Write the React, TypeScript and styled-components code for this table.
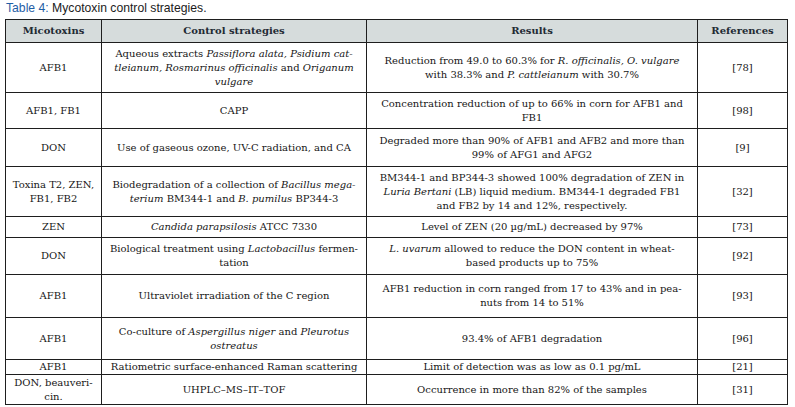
import React from 'react';
import styled, {createGlobalStyle} from 'styled-components';

interface RowData {
    h: number,
    toxin: React.ReactNode,
    strategy: React.ReactNode,
    result: React.ReactNode,
    ref: string
}

// row heights are taken from the scanned table, border included
const ROWS: RowData[] = [
    {
        h: 50,
        toxin: 'AFB1',
        strategy: <>Aqueous extracts <i>Passiflora alata, Psidium cat-</i><br /><i>tleianum, Rosmarinus officinalis</i> and <i>Origanum</i><br /><i>vulgare</i></>,
        result: <>Reduction from 49.0 to 60.3% for <i>R. officinalis, O. vulgare</i><br />with 38.3% and <i>P. cattleianum</i> with 30.7%</>,
        ref: '[78]'
    },
    {
        h: 36,
        toxin: 'AFB1, FB1',
        strategy: 'CAPP',
        result: <>Concentration reduction of up to 66% in corn for AFB1 and<br />FB1</>,
        ref: '[98]'
    },
    {
        h: 38,
        toxin: 'DON',
        strategy: 'Use of gaseous ozone, UV-C radiation, and CA',
        result: <>Degraded more than 90% of AFB1 and AFB2 and more than<br />99% of AFG1 and AFG2</>,
        ref: '[9]'
    },
    {
        h: 50,
        toxin: <>Toxina T2, ZEN,<br />FB1, FB2</>,
        strategy: <>Biodegradation of a collection of <i>Bacillus mega-</i><br /><i>terium</i> BM344-1 and <i>B. pumilus</i> BP344-3</>,
        result: <>BM344-1 and BP344-3 showed 100% degradation of ZEN in<br /><i>Luria Bertani</i> (LB) liquid medium. BM344-1 degraded FB1<br />and FB2 by 14 and 12%, respectively.</>,
        ref: '[32]'
    },
    {
        h: 21,
        toxin: 'ZEN',
        strategy: <><i>Candida parapsilosis</i> ATCC 7330</>,
        result: 'Level of ZEN (20 µg/mL) decreased by 97%',
        ref: '[73]'
    },
    {
        h: 37,
        toxin: 'DON',
        strategy: <>Biological treatment using <i>Lactobacillus</i> fermen-<br />tation</>,
        result: <><i>L. uvarum</i> allowed to reduce the DON content in wheat-<br />based products up to 75%</>,
        ref: '[92]'
    },
    {
        h: 43,
        toxin: 'AFB1',
        strategy: 'Ultraviolet irradiation of the C region',
        result: <>AFB1 reduction in corn ranged from 17 to 43% and in pea-<br />nuts from 14 to 51%</>,
        ref: '[93]'
    },
    {
        h: 42,
        toxin: 'AFB1',
        strategy: <>Co-culture of <i>Aspergillus niger</i> and <i>Pleurotus</i><br /><i>ostreatus</i></>,
        result: '93.4% of AFB1 degradation',
        ref: '[96]'
    },
    {
        h: 15,
        toxin: 'AFB1',
        strategy: 'Ratiometric surface-enhanced Raman scattering',
        result: 'Limit of detection was as low as 0.1 pg/mL',
        ref: '[21]'
    },
    {
        h: 29,
        toxin: <>DON, beauveri-<br />cin.</>,
        strategy: 'UHPLC–MS–IT–TOF',
        result: 'Occurrence in more than 82% of the samples',
        ref: '[31]'
    }
];

const App = () => {
    return (<>
        <GlobalStyle />
        <Page>
            <Caption><CaptionLabel>Table 4:</CaptionLabel> Mycotoxin control strategies.</Caption>
            <Table>
                <HeadRow>
                    <HeadCell><CellText>Micotoxins</CellText></HeadCell>
                    <HeadCell><CellText>Control strategies</CellText></HeadCell>
                    <HeadCell><CellText>Results</CellText></HeadCell>
                    <HeadCell><CellText>References</CellText></HeadCell>
                </HeadRow>
                {ROWS.map((row, i) =>
                    <Row key={i} $h={row.h}>
                        <Cell><CellText>{row.toxin}</CellText></Cell>
                        <Cell><CellText>{row.strategy}</CellText></Cell>
                        <Cell><CellText>{row.result}</CellText></Cell>
                        <Cell><CellText>{row.ref}</CellText></Cell>
                    </Row>
                )}
            </Table>
        </Page>
    </>)
}

const GlobalStyle = createGlobalStyle`
    html, body {
        margin: 0;
        background: #ffffff;
    }
`

const Page = styled.div`
    width: 795px;
    padding: 0 0 0 5px;
    box-sizing: border-box;
`

const Caption = styled.div`
    font-family: "Liberation Sans", Arial, sans-serif;
    font-size: 12.2px;
    line-height: 17px;
    height: 19px;
    color: #1b1b1b;
    padding-left: 1px;
`

const CaptionLabel = styled.span`
    color: #1f5ea6;
`

const Table = styled.div`
    width: 783px;
    border: 1px solid #1e1e1e;
    box-sizing: border-box;
    font-family: "DejaVu Serif", "Liberation Serif", serif;
    font-size: 10px;
    line-height: 14px;
    color: #161616;
`

const Row = styled.div<{$h: number}>`
    display: grid;
    grid-template-columns: 96px 265px 331px 1fr;
    box-sizing: border-box;
    height: ${p => p.$h}px;
    border-bottom: 1px solid #1e1e1e;

    &:last-child {
        border-bottom: none;
    }
`

const HeadRow = styled(Row).attrs({$h: 23})`
    background-color: #d6dcdc;
`

const CellText = styled.div`
    text-align: center;
    white-space: nowrap;

    i {
        font-style: italic;
    }
`

const Cell = styled.div`
    display: flex;
    align-items: center;
    justify-content: center;
    padding: 0 4px;
    border-right: 1px solid #1e1e1e;

    &:last-child {
        border-right: none;
    }
`

const HeadCell = styled(Cell)`
    font-weight: bold;
    color: #222a33;
`

export default App;
